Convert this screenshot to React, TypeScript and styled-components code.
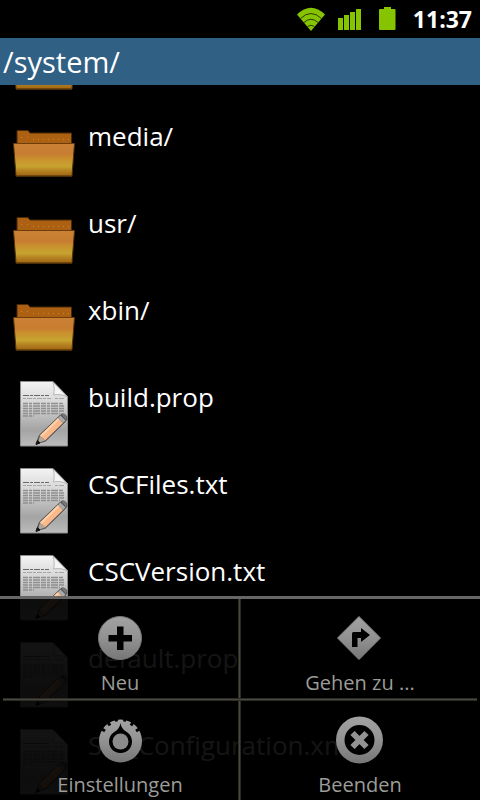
import React from "react";
import styled, { createGlobalStyle } from "styled-components";

const GlobalStyle = createGlobalStyle`
  *, *::before, *::after { box-sizing: border-box; }
  body { margin: 0; background: #000; }
`;

const Screen = styled.div`
  position: relative;
  display: flex;
  flex-direction: column;
  height: 100vh;
  overflow: hidden;
  background: #000;
  color: #fff;
  font-family: "Open Sans", "Noto Sans", sans-serif;
`;

const StatusBar = styled.header`
  display: flex;
  flex: none;
  align-items: center;
  justify-content: flex-end;
  height: 38px;
  padding-right: 8px;
`;

const StatusIcons = styled.div`
  display: flex;
  align-items: center;
  gap: 8px;
  margin-right: 10px;
`;

const StatusIcon = styled.svg`
  display: block;
  width: 30px;
  height: 30px;
`;

const Clock = styled.time`
  min-width: 60px;
  font-size: 23px;
  font-weight: 700;
  line-height: 36px;
  text-align: right;
`;

const PathBar = styled.h1`
  z-index: 1;
  flex: none;
  height: 47px;
  margin: 0;
  padding: 0 3px;
  background: #306084;
  font-size: 29px;
  font-weight: 400;
  line-height: 47px;
`;

const FileArea = styled.main`
  flex: 1;
  min-height: 0;
  overflow: hidden;
`;

const FileList = styled.ul`
  margin: -62px 0 0;
  padding: 0;
  list-style: none;
`;

const FileRow = styled.button`
  display: flex;
  align-items: flex-start;
  gap: 8px;
  width: 100%;
  height: 87px;
  padding: 7px 8px;
  border: 0;
  background: transparent;
  color: #fff;
  font-family: inherit;
  font-size: 26px;
  line-height: 38px;
  text-align: left;
`;

const FileIcon = styled.svg`
  display: block;
  flex: none;
  width: 72px;
  height: 72px;
`;

const OptionsMenu = styled.nav`
  position: absolute;
  right: 0;
  bottom: 0;
  left: 0;
  display: grid;
  grid-template-columns: 1fr 0 1fr;
  border-top: 3px solid #666;
  background: rgba(0, 0, 0, 0.92);
`;

const RowDivider = styled.hr`
  grid-column: 1 / -1;
  width: auto;
  height: 3px;
  margin: 0 3px;
  border: solid #2b2a23;
  border-width: 1px 0;
  background: #4a493f;
`;

const ColumnDivider = styled.span`
  width: 3px;
  margin-left: -2px;
  border: solid #2b2a23;
  border-width: 0 1px;
  background: #4a493f;
`;

const MenuButton = styled.button`
  display: flex;
  flex-direction: column;
  align-items: center;
  height: 99px;
  padding: 15px 0 0;
  border: 0;
  background: transparent;
  color: #9c9c98;
  font-family: inherit;
  font-size: 20px;
  line-height: 42px;
`;

const MenuIcon = styled.svg`
  display: block;
  flex: none;
  width: 48px;
  height: 48px;
`;

const GREEN = "#86c400";

function FolderGlyph({ id }: { id: string }) {
  return (
    <FileIcon viewBox="0 0 72 72" aria-hidden="true">
      <defs>
        <linearGradient id={id} x1="0" y1="0" x2="0" y2="1">
          <stop offset="0" stopColor="#cb8236" />
          <stop offset="0.34" stopColor="#c87d30" />
          <stop offset="0.46" stopColor="#c98f2e" />
          <stop offset="0.7" stopColor="#c7a42f" />
          <stop offset="0.8" stopColor="#b98a25" />
          <stop offset="1" stopColor="#a06312" />
        </linearGradient>
      </defs>
      <path d="M9 27V13.500h11l2 2.500h41.500V27z" fill="#ab6012" stroke="#4a2a08" />
      <path d="M13 20.500h1M19 20.500h1M25 22.500h36" stroke="#c98434" strokeDasharray="1 4" />
      <path d="M5.500 26.500h61L64 59H8z" fill={`url(#${id})`} stroke="#50310c" />
      <path d="M6 26.500h60" stroke="#6d3d0d" />
      <path d="M8 59h56" stroke="#6d420c" />
    </FileIcon>
  );
}

function DocumentGlyph({ id }: { id: string }) {
  return (
    <FileIcon viewBox="0 0 72 72" aria-hidden="true">
      <defs>
        <linearGradient id={id} x1="0" y1="0" x2="0" y2="1">
          <stop offset="0" stopColor="#f4f4f4" />
          <stop offset="0.35" stopColor="#d4d4d4" />
          <stop offset="0.75" stopColor="#a4a4a4" />
          <stop offset="1" stopColor="#bcbcbc" />
        </linearGradient>
      </defs>
      <path d="M12.500 3.500h32.500l14.500 15v49.500h-47z" fill={`url(#${id})`} stroke="#8d8d8d" />
      <path d="M45 4c1.500 5 1.500 9 0.500 13 5-1 9-0.500 14 2z" fill="#f4f4f4" stroke="#a0a0a0" strokeWidth="0.700" />
      <path d="M15 17.500h26" stroke="#6a6a6a" strokeDasharray="6 1 3 1" />
      <path d="M15 20.500h28M47 20.500h9" stroke="#a6a6a6" strokeDasharray="3 1 5 1" />
      <path d="M15 25.500h40M15 28h41M15 30.500h41M15 33h41M15 35.500h37M15 38h11" stroke="#8f8f8f" strokeWidth="1.500" strokeDasharray="5 1 3 1 7 1" />
      <path d="M28 66l3.500-9L51.500 38q3-4 6.500-0.500 2.500 3-0.500 6L37.500 63z" fill="#555" stroke="#555" strokeWidth="1" strokeLinejoin="round" />
      <path d="M32 57.500L50 40l5 5L37 62.500z" fill="#f9b98a" />
      <path d="M32 57.500L50 40l1.500 1.500L33.500 59z" fill="#ffd0aa" />
      <path d="M32 57.500l5 5-7 2.500z" fill="#b3a79a" />
      <path d="M50 40l2.500-2.500 5 5L55 45z" fill="#aaa" />
      <path d="M53.500 36.500q3-1.500 4.500 1t0 4.500z" fill="#777" />
      <path d="M28 66.500l1.500-4 2.500 2.500z" fill="#111" stroke="#111" />
    </FileIcon>
  );
}

function MetalGradient({ id }: { id: string }) {
  return (
    <defs>
      <linearGradient id={id} x1="0" y1="0" x2="0" y2="1">
        <stop offset="0" stopColor="#a2a2a2" />
        <stop offset="0.45" stopColor="#949494" />
        <stop offset="1" stopColor="#777" />
      </linearGradient>
    </defs>
  );
}

function AddGlyph() {
  return (
    <MenuIcon viewBox="0 0 48 48" aria-hidden="true">
      <MetalGradient id="metal-add" />
      <circle cx="24" cy="24" r="21.500" fill="url(#metal-add)" stroke="#777" />
      <path d="M21 12.500h6.500V21H36v6.500h-8.500V36H21v-8.500h-8.500V21H21z" fill="#000" />
    </MenuIcon>
  );
}

function GoToGlyph() {
  return (
    <MenuIcon viewBox="0 0 48 48" aria-hidden="true">
      <MetalGradient id="metal-goto" />
      <path d="M23 2.500L44.500 24 23 45.500 1.500 24z" fill="url(#metal-goto)" stroke="#888" strokeLinejoin="round" />
      <path d="M16 33V19.500q0-1.500 1.500-1.500H25v-4l9 7-9 7v-4h-3.500v9z" fill="#000" />
    </MenuIcon>
  );
}

function SettingsGlyph() {
  return (
    <MenuIcon viewBox="0 0 48 48" aria-hidden="true">
      <MetalGradient id="metal-settings" />
      <circle cx="24.500" cy="25" r="21.500" fill="url(#metal-settings)" />
      <path
        d="M20 2l0.500 3.500M29 2l-0.500 3.500M11.500 5.500l2.500 4M37.500 5.500l-2.500 4M5 12.500l4 2.500M44 12.500l-4 2.500"
        stroke="#000"
        strokeWidth="3"
      />
      <path d="M24.500 7c0.500 4 2.500 6.500 5.500 8.500a11.500 11.500 0 1 1-11 0c3-2 5-4.500 5.500-8.500z" fill="#000" />
      <circle cx="24.500" cy="25.500" r="8" fill="#8b8b8b" />
    </MenuIcon>
  );
}

function QuitGlyph() {
  return (
    <MenuIcon viewBox="0 0 48 48" aria-hidden="true">
      <MetalGradient id="metal-quit" />
      <circle cx="23.500" cy="24" r="23.500" fill="url(#metal-quit)" />
      <circle cx="23.500" cy="24" r="15" fill="#000" />
      <path d="M16.500 17l14 14M30.500 17l-14 14" stroke="#929292" strokeWidth="6" />
    </MenuIcon>
  );
}

function WifiGlyph() {
  return (
    <StatusIcon viewBox="0 0 30 30" role="img" aria-label="WLAN">
      <path d="M1 10.500Q15-3 29 10.500L15 27z" fill={GREEN} />
      <path
        d="M4.500 14.500Q15 4.500 25.500 14.500M8 18.500Q15 12 22 18.500M11.500 22.500Q15 20 18.500 22.500"
        fill="none"
        stroke="#2c3a08"
        strokeWidth="1"
      />
    </StatusIcon>
  );
}

function SignalGlyph() {
  return (
    <StatusIcon viewBox="0 0 30 30" role="img" aria-label="Signal">
      <path d="M4 14h5v12H4zM10 11h5v15h-5zM16 8h5v18h-5zM22 5h5v21h-5z" fill={GREEN} />
    </StatusIcon>
  );
}

function BatteryGlyph() {
  return (
    <StatusIcon viewBox="0 0 30 30" role="img" aria-label="Akku">
      <path d="M12 3h7v2h3.500q1 0 1 1v19q0 1-1 1H8q-1 0-1-1V6q0-1 1-1h4z" fill={GREEN} />
    </StatusIcon>
  );
}

type Entry = { kind: "folder" | "file"; name?: string };

const entries: Entry[] = [
  { kind: "folder" },
  { kind: "folder", name: "media/" },
  { kind: "folder", name: "usr/" },
  { kind: "folder", name: "xbin/" },
  { kind: "file", name: "build.prop" },
  { kind: "file", name: "CSCFiles.txt" },
  { kind: "file", name: "CSCVersion.txt" },
  { kind: "file", name: "default.prop" },
  { kind: "file", name: "SW_Configuration.xml" },
];

export default function App() {
  return (
    <Screen>
      <GlobalStyle />
      <StatusBar>
        <StatusIcons>
          <WifiGlyph />
          <SignalGlyph />
          <BatteryGlyph />
        </StatusIcons>
        <Clock>11:37</Clock>
      </StatusBar>
      <PathBar>/system/</PathBar>
      <FileArea>
        <FileList>
          {entries.map((entry, i) => (
            <li key={i}>
              <FileRow type="button">
                {entry.kind === "folder" ? (
                  <FolderGlyph id={`folder-${i}`} />
                ) : (
                  <DocumentGlyph id={`document-${i}`} />
                )}
                {entry.name && <span>{entry.name}</span>}
              </FileRow>
            </li>
          ))}
        </FileList>
      </FileArea>
      <OptionsMenu>
        <MenuButton type="button">
          <AddGlyph />
          Neu
        </MenuButton>
        <ColumnDivider />
        <MenuButton type="button">
          <GoToGlyph />
          Gehen zu ...
        </MenuButton>
        <RowDivider />
        <MenuButton type="button">
          <SettingsGlyph />
          Einstellungen
        </MenuButton>
        <ColumnDivider />
        <MenuButton type="button">
          <QuitGlyph />
          Beenden
        </MenuButton>
      </OptionsMenu>
    </Screen>
  );
}
